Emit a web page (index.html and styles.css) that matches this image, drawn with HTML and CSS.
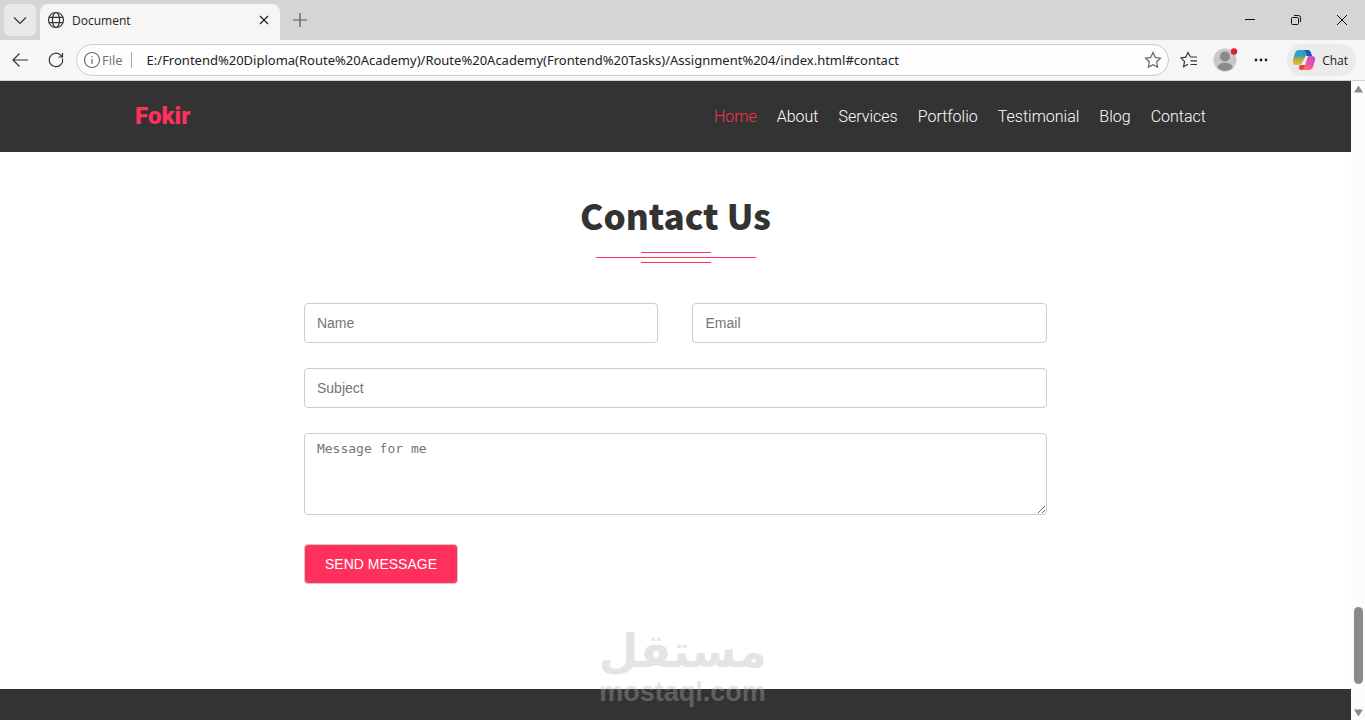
FILE: index.html
```
<!DOCTYPE html>
<html lang="en">
	<head>
		<meta charset="utf-8">
		<meta name="viewport" content="width=device-width, initial-scale=1">
		<title>Document</title>
		<link rel="stylesheet" href="styles.css">
	</head>

	<body>
		<!--Tab strip-->
		<div class="tabs">
			<button class="tab-list" aria-label="Tab actions">
				<svg width="16" height="16" viewBox="0 0 16 16"><path d="M2 5.5l6 6 6-6"/></svg>
			</button>
			<div class="tab">
				<svg width="18" height="18" viewBox="0 0 18 18"><circle cx="9" cy="9" r="7.5"/><ellipse cx="9" cy="9" rx="3.6" ry="7.5"/><path d="M2 6.3h14M2 11.7h14"/></svg>
				<span class="tab-title">Document</span>
				<button class="tab-close" aria-label="Close tab">
					<svg width="10" height="10" viewBox="0 0 10 10"><path d="M1 1l8 8M9 1l-8 8"/></svg>
				</button>
			</div>
			<button class="new-tab" aria-label="New tab">
				<svg width="16" height="16" viewBox="0 0 16 16"><path d="M8 1v14M1 8h14"/></svg>
			</button>
			<div class="window-buttons">
				<button aria-label="Minimize"><svg width="12" height="12" viewBox="0 0 12 12"><path d="M1 5.5h10"/></svg></button>
				<button aria-label="Restore"><svg width="12" height="12" viewBox="0 0 12 12"><rect x="1.5" y="3.5" width="7" height="7" rx="1"/><path d="M4 1.5h4.5q2 0 2 2V8"/></svg></button>
				<button aria-label="Close"><svg width="12" height="12" viewBox="0 0 12 12"><path d="M1 1l10 10M11 1L1 11"/></svg></button>
			</div>
		</div>

		<!--Toolbar with the address box-->
		<div class="toolbar">
			<button class="tool" aria-label="Back">
				<svg width="18" height="18" viewBox="0 0 18 18"><path d="M17 9H2M8.500 2.500L2 9l6.500 6.500"/></svg>
			</button>
			<button class="tool" aria-label="Refresh">
				<svg width="18" height="18" viewBox="0 0 18 18"><path d="M15.500 7.500A6.700 6.700 0 1 1 13 3.600L15.500 6M15.500 2v4h-4"/></svg>
			</button>
			<form class="address">
				<svg class="info" width="18" height="18" viewBox="0 0 18 18"><circle cx="9" cy="9" r="7.5"/><path d="M9 8v5M9 5v1.200"/></svg>
				<label for="url">File</label>
				<input type="text" id="url" value="E:/Frontend%20Diploma(Route%20Academy)/Route%20Academy(Frontend%20Tasks)/Assignment%204/index.html#contact">
				<button type="button" class="star" aria-label="Add to favorites">
					<svg width="18" height="18" viewBox="0 0 18 18"><path d="M9 1.500l2.300 4.900 5.200.7-3.800 3.700.9 5.300L9 13.600l-4.600 2.500.9-5.300L1.500 7.100l5.200-.7z"/></svg>
				</button>
			</form>
			<button class="tool" aria-label="Favorites">
				<svg width="18" height="18" viewBox="0 0 18 18"><path d="M10.500 6L8 1.500 5.800 6.200l-4.900.7 3.600 3.500-.9 5.300L8 13.300M10.500 6H17M10.500 9.800H17M10.500 13.500H17"/></svg>
			</button>
			<button class="tool profile" aria-label="Profile">
				<svg width="26" height="26" viewBox="0 0 26 26"><circle cx="13" cy="13" r="11.500" fill="#c8c8c8"/><circle cx="13" cy="9.500" r="5" fill="#8a8a8d"/><path d="M5.500 21c0-7 15-7 15 0q-7.500 6-15 0z" fill="#8a8a8d"/><circle cx="22" cy="4.500" r="3.200" fill="#d9232e"/></svg>
			</button>
			<button class="tool" aria-label="Settings and more">
				<svg width="18" height="18" viewBox="0 0 18 18"><g fill="#222" stroke="none"><circle cx="4" cy="9" r="1.400"/><circle cx="9" cy="9" r="1.400"/><circle cx="14" cy="9" r="1.400"/></g></svg>
			</button>
			<button class="chat">
				<svg width="24" height="24" viewBox="0 0 24 24">
					<defs>
						<linearGradient id="left" x1="0" y1="0" x2="0" y2="1"><stop offset="0" stop-color="#2799e0"/><stop offset=".4" stop-color="#3f9fae"/><stop offset=".65" stop-color="#b4b03c"/><stop offset="1" stop-color="#f2b52c"/></linearGradient>
						<linearGradient id="right" x1="1" y1="0" x2="0" y2="1"><stop offset="0" stop-color="#b04be0"/><stop offset=".45" stop-color="#ee4fb0"/><stop offset="1" stop-color="#ff8a3c"/></linearGradient>
					</defs>
					<g stroke="none">
						<path d="M7 2h9q2 0 3 3l1 3h-5q-2 0-3 3l-2 4q-1 2-4 2H4q-4 0-3-5l2-7q1-3 4-3z" fill="url(#left)"/>
						<path d="M12 2h4q2 0 3 3l1 3h-5q-1-5-3-6z" fill="#1b55b5"/>
						<path d="M17 22H8q2-1 3-4l2-7q1-3 4-3h2q5 0 4 4l-2 7q-1 3-4 3z" fill="url(#right)"/>
						<path d="M8 17h5l-1 3q-1 2-3 2t-2-3z" fill="#ed3b3b"/>
						<path d="M14 8h2l-3 9h-3z" fill="#f3eef0"/>
					</g>
				</svg>
				Chat
			</button>
		</div>

		<div class="view">
			<div class="page">
				<header class="header">
					<a href="#home" class="logo">Fokir</a>
					<nav class="nav">
						<a href="#home" class="active">Home</a>
						<a href="#about">About</a>
						<a href="#services">Services</a>
						<a href="#portfolio">Portfolio</a>
						<a href="#testimonial">Testimonial</a>
						<a href="#blog">Blog</a>
						<a href="#contact">Contact</a>
					</nav>
				</header>

				<!--Contact section-->
				<section class="contact" id="contact">
					<h1>Contact Us</h1>
					<div class="lines">
						<span class="line"></span>
						<span class="line long"></span>
						<span class="line"></span>
					</div>
					<form class="form">
						<div class="row">
							<input type="text" placeholder="Name" aria-label="Name">
							<input type="email" placeholder="Email" aria-label="Email">
						</div>
						<input type="text" placeholder="Subject" aria-label="Subject">
						<textarea placeholder="Message for me" aria-label="Message for me"></textarea>
						<button type="button" class="send">SEND MESSAGE</button>
					</form>
				</section>

				<footer class="footer"></footer>
			</div>

			<!--Scroll bar-->
			<div class="scrollbar">
				<svg width="9" height="8" viewBox="0 0 9 8"><path d="M4.500 1.500L8 7H1z"/></svg>
				<span class="thumb"></span>
				<svg width="9" height="8" viewBox="0 0 9 8"><path d="M4.500 6.500L1 1h7z"/></svg>
			</div>
		</div>

		<div class="watermark">
			<span class="mark-ar" lang="ar" dir="rtl">مستقل</span>
			<span class="mark-en">mostaql.com</span>
		</div>
	</body>
</html>
```
FILE: styles.css
```
* {
	box-sizing: border-box;
}

body {
	margin: 0;
	height: 100vh;
	display: flex;
	flex-direction: column;
	position: relative;
	overflow: hidden;
	background: #fff;
	font-family: Roboto, sans-serif;
}

button {
	border: 0;
	padding: 0;
	background: none;
	cursor: pointer;
	font-family: inherit;
}

a {
	text-decoration: none;
}

svg {
	display: block;
	flex: none;
	fill: none;
	stroke: #333;
	stroke-width: 1.2px;
}

/* Tab strip */
.tabs {
	display: flex;
	align-items: center;
	height: 40px;
	flex: none;
	background: #d5d5d5;
	font-family: "Open Sans", sans-serif;
}

.tab-list {
	display: grid;
	place-items: center;
	width: 32px;
	height: 32px;
	margin: 0 4px;
	border-radius: 6px;
	background: #e8e8e8;
}

.tab {
	display: flex;
	align-items: center;
	gap: 7px;
	align-self: stretch;
	width: 240px;
	margin-top: 4px;
	padding: 0 9px 4px 7px;
	border-radius: 8px 8px 0 0;
	background: #f6f6f6;
}

.tab-title {
	flex: 1;
	font-size: 12px;
	color: #222;
}

.tab-close {
	padding: 2px;
}

.tab-close svg {
	stroke: #222;
}

.new-tab {
	padding: 12px;
}

.new-tab svg {
	stroke: #555;
}

.window-buttons {
	display: flex;
	margin-left: auto;
}

.window-buttons button {
	display: grid;
	place-items: center;
	width: 46px;
	height: 40px;
}

.window-buttons svg {
	stroke: #111;
	stroke-width: 1px;
}

/* Toolbar */
.toolbar {
	display: flex;
	align-items: center;
	height: 41px;
	flex: none;
	padding: 0 9px 0 2px;
	background: #f6f6f6;
	border-bottom: 1px solid #d0d4d2;
	font-family: "Open Sans", sans-serif;
}

.tool {
	display: grid;
	place-items: center;
	width: 36px;
	height: 32px;
}

.address {
	display: flex;
	align-items: center;
	flex: 1;
	height: 32px;
	margin: 0 2px;
	padding: 0 6px;
	border: 1px solid #ccc;
	border-radius: 16px;
	background: #fdfdfd;
}

.address .info {
	stroke: #707070;
}

.address label {
	padding: 0 8px 0 1px;
	border-right: 1px solid #aaa;
	font-size: 13px;
	line-height: 16px;
	color: #707070;
}

.address input {
	flex: 1;
	min-width: 0;
	padding: 0 15px;
	border: 0;
	outline: 0;
	background: none;
	font-family: "Noto Sans", sans-serif;
	font-size: 13px;
	color: #222;
}

.star svg {
	stroke: #666;
}

.profile svg {
	stroke: none;
}

.chat {
	display: flex;
	align-items: center;
	gap: 6px;
	height: 32px;
	margin-left: 8px;
	padding: 0 8px 0 5px;
	border-radius: 16px;
	background: #ebebeb;
	font-size: 12px;
	color: #222;
}

/* Page area */
.view {
	display: flex;
	flex: 1;
	min-height: 0;
}

.page {
	display: flex;
	flex-direction: column;
	flex: 1;
}

.header {
	display: flex;
	align-items: center;
	justify-content: space-between;
	padding: 20px 10%;
	background: #333;
}

.logo {
	font-size: 24px;
	line-height: 31px;
	font-weight: 900;
	color: #ff305b;
}

.nav {
	display: flex;
	gap: 20px;
	padding-right: 10px;
	font-size: 16px;
	font-weight: 300;
}

.nav a {
	color: #fff;
}

.nav .active {
	color: #ff304f;
}

.contact {
	display: flex;
	flex-direction: column;
	align-items: center;
	padding: 40px 0 105px;
}

.contact h1 {
	margin: 0;
	font-family: "Noto Sans CJK SC", sans-serif;
	font-size: 35px;
	line-height: 46px;
	font-weight: 900;
	color: #333;
}

.lines {
	display: flex;
	flex-direction: column;
	align-items: center;
	gap: 4px;
	margin: 14px 0 40px;
}

.line {
	width: 70px;
	height: 1px;
	background: #ff305b;
}

.long {
	width: 160px;
}

.form {
	display: flex;
	flex-direction: column;
	gap: 25px;
	width: 55%;
}

.row {
	display: flex;
	gap: 34px;
}

.form input,
.form textarea {
	width: 100%;
	height: 40px;
	padding: 0 12px;
	border: 1px solid #ccc;
	border-radius: 4px;
	background: #fff;
	font-family: "Liberation Sans", sans-serif;
	font-size: 14px;
	color: #333;
}

.form textarea {
	height: 82px;
	padding: 7px 12px;
	font-family: "DejaVu Sans Mono", monospace;
	font-size: 13px;
}

.form ::placeholder {
	color: #757575;
}

.send {
	align-self: flex-start;
	height: 40px;
	margin-top: 4px;
	padding: 0 20px;
	border: 1px solid #ccc;
	border-radius: 4px;
	background: #ff305b;
	font-family: "Liberation Sans", sans-serif;
	font-size: 14px;
	color: #fff;
}

.footer {
	flex: 1;
	background: #333;
}

.scrollbar {
	display: flex;
	flex-direction: column;
	align-items: center;
	width: 14px;
	padding: 4px 0 3px;
	background: #fcfcfc;
}

.scrollbar svg {
	fill: #8a8a8d;
	stroke: #8a8a8d;
}

.thumb {
	width: 9px;
	height: 77px;
	margin: auto 0 25px;
	border-radius: 5px;
	background: #8a8a8d;
}

/* Lies over the page and the footer */
.watermark {
	display: flex;
	flex-direction: column;
	align-items: center;
	position: absolute;
	left: 0;
	right: 0;
	bottom: 12px;
	pointer-events: none;
	color: #b4b4b0;
	opacity: .35;
}

.mark-ar {
	font-family: "DejaVu Sans", sans-serif;
	font-size: 46px;
	line-height: 50px;
	font-weight: 700;
}

.mark-en {
	font-family: "Liberation Sans", sans-serif;
	font-size: 27px;
	line-height: 32px;
	font-weight: 700;
}
```
